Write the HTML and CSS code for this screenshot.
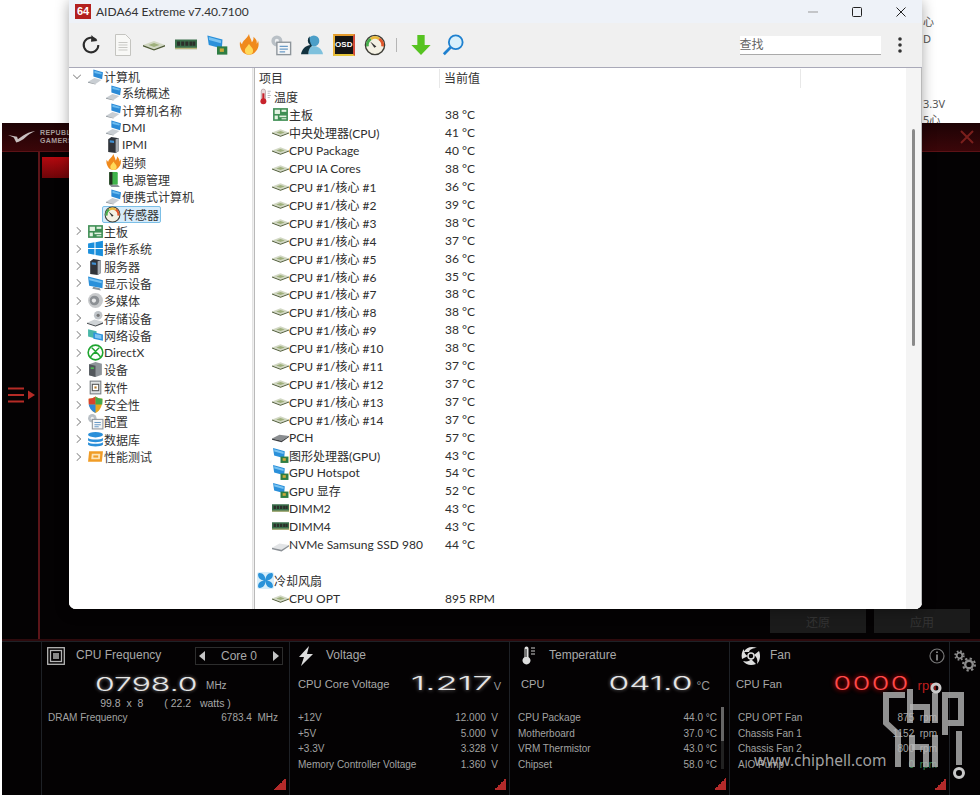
FILE: index.html
```html
<!DOCTYPE html>
<html lang="zh-CN">
<head>
<meta charset="utf-8">
<title>AIDA64 Extreme</title>
<link rel="stylesheet" href="styles.css">
</head>
<body>
<svg class="defs" width="0" height="0" aria-hidden="true">
  <symbol id="i-pc" viewBox="0 0 16 16"><path d="M6 1.500l9 2.500-.8 6.500L6 8z" fill="#2b8ad6"/><path d="M7 2.600l7 2-.5 1.600L7 4.600z" fill="#6cbcf0"/><path d="M1 13l6-3.600 6.600 2L8 15z" fill="#c9ced3"/><path d="M1 13l7 2 0 .6-7-1.800z" fill="#8d949a"/></symbol>
  <symbol id="i-chip" viewBox="0 0 16 16"><path d="M0 8l8-3 8 3-8 3z" fill="#d2d8c4"/><path d="M0 8l8 3 8-3 0 1-8 3-8-3z" fill="#4d5a36"/><path d="M4 8l4-1.500L12 8l-4 1.500z" fill="#9fb07c"/></symbol>
  <symbol id="i-board" viewBox="0 0 16 16"><rect x="1" y="2" width="14" height="12" fill="#3f8f55"/><rect x="2.500" y="3.500" width="5" height="4" fill="#e4f2e2"/><rect x="9" y="3.500" width="4.500" height="2" fill="#e4f2e2"/><rect x="2.500" y="9" width="3" height="3.500" fill="#e4f2e2"/><rect x="7" y="9" width="6.500" height="1.500" fill="#e4f2e2"/><rect x="9" y="11.500" width="4.500" height="1" fill="#e4f2e2"/></symbol>
  <symbol id="i-server" viewBox="0 0 16 16"><path d="M3 3l3-2 7 1v12l-3 2-7-1z" fill="#30343a"/><path d="M10 3l3-1v12l-3 2z" fill="#a6acb2"/><path d="M4.500 4l4 .5v2l-4-.5z" fill="#3f8fd0"/></symbol>
  <symbol id="i-flame" viewBox="0 0 16 16"><path d="M8 0c.5 3 2 4 2 6 1-1 1.500-2.500 1.200-4 2 2 2.800 3 2.300 5 .8-.5 1-1.500 1-2.500 1 3 .5 6-1.500 8-1.500 2-3 2.500-5 2.500s-4-.8-5-2.500C1.500 10 1 8 1.500 5.500c.5 1 1 1.500 1.500 2C3 5 6.500 3.500 8 0z" fill="#f08a1d"/><path d="M8 7c1 2 3 3 3 5s-1 3-3 3-3-1-3-3 2-3 3-5z" fill="#ffd95a"/></symbol>
  <symbol id="i-power" viewBox="0 0 16 16"><rect x="4" y="1" width="8" height="12" rx="1" fill="#3fb24a"/><rect x="4" y="1" width="3" height="12" fill="#23301f"/><path d="M4 13h8l2 2H6z" fill="#8b9096"/></symbol>
  <symbol id="i-gauge" viewBox="0 0 16 16"><circle cx="8" cy="8" r="7" fill="#f4f1e4" stroke="#3d3d36" stroke-width="1"/><path d="M2.500 9A5.500 5.500 0 0 1 5 3.500" fill="none" stroke="#46ac4c" stroke-width="2"/><path d="M5 3.500A5.500 5.500 0 0 1 11 3.500" fill="none" stroke="#e9b93a" stroke-width="2"/><path d="M11 3.500A5.500 5.500 0 0 1 13.500 9" fill="none" stroke="#e0572c" stroke-width="2"/><path d="M4.500 5.500L9 9l-1.500 1z" fill="#333"/></symbol>
  <symbol id="i-win" viewBox="0 0 16 16"><path d="M1 3.200l6-1v5.300H1zM8 2l7-1.200v6.700H8zM1 8.500h6v5.300l-6-1zM8 8.500h7v6.700L8 14z" fill="#1a8fdc"/></symbol>
  <symbol id="i-mon" viewBox="0 0 16 16"><path d="M1 1.500l14 3.500-.5 7.500L2 10z" fill="#2a90da"/><path d="M2 2.800l12 3-.3 2L2.200 5z" fill="#74c0f0"/><path d="M6 11l6 1.500 1 2-8-1.500z" fill="#8c949b"/></symbol>
  <symbol id="i-media" viewBox="0 0 16 16"><circle cx="8" cy="8" r="7" fill="#c7c9cb"/><circle cx="7" cy="8" r="4.500" fill="#8c9094"/><circle cx="6.500" cy="8" r="2" fill="#e6e7e8"/></symbol>
  <symbol id="i-storage" viewBox="0 0 16 16"><path d="M0 12l7-3 8 2-7 3.500z" fill="#cfd3d6"/><path d="M0 12l8 2.500 7-3v1.500l-7 2.500-8-2.500z" fill="#44484c"/><circle cx="10.500" cy="5" r="4" fill="#bfc4c8"/><circle cx="10.500" cy="5" r="1.500" fill="#777"/></symbol>
  <symbol id="i-net" viewBox="0 0 16 16"><path d="M1 2l8 2v7l-8-2z" fill="#49b7a8"/><path d="M6 5l9 2v6l-9-2z" fill="#2f93dc"/><path d="M7.500 6.500l6 1.300v3.500l-6-1.300z" fill="#7fc5f2"/></symbol>
  <symbol id="i-xbox" viewBox="0 0 16 16"><circle cx="8" cy="8" r="6.900" fill="#fff" stroke="#1fa52f" stroke-width="1.500"/><path d="M4.500 3.500C6 4.800 7.200 6 8 7c.8-1 2-2.200 3.500-3.500M3.300 12.200C4.500 10 6.500 8.300 8 7.500c1.500.8 3.500 2.500 4.700 4.700" fill="none" stroke="#1fa52f" stroke-width="1.400"/></symbol>
  <symbol id="i-device" viewBox="0 0 16 16"><path d="M2 3l6-2 6 1.500v10.500l-6 2-6-1.500z" fill="#8e9499"/><path d="M2 3l6 1.500V15l-6-1.500z" fill="#52575c"/><rect x="3.500" y="6" width="3" height="1.500" fill="#4fbf55"/></symbol>
  <symbol id="i-soft" viewBox="0 0 16 16"><rect x="3" y="2" width="10" height="12" fill="#dfe2e4" stroke="#777c80"/><rect x="5" y="5" width="6" height="6" fill="#fff" stroke="#555"/><rect x="7" y="7" width="2" height="2" fill="#b37a2e"/></symbol>
  <symbol id="i-shield" viewBox="0 0 16 16"><path d="M8 .5c2 1.500 4 2 6.500 2 0 6-1.500 11-6.500 13.500C3 13.500 1.500 8.500 1.500 2.500c2.500 0 4.500-.5 6.500-2z" fill="#e8a81f"/><path d="M8 .5V8H1.600c0-2 0-3.500 0-5.500 2.400 0 4.400-.5 6.400-2z" fill="#d8412e"/><path d="M8 .5V8h6.400c.1-2 .1-3.500.1-5.500-2.500 0-4.500-.5-6.500-2z" fill="#43a84a"/><path d="M1.600 8H8v8C4 14 2 11 1.600 8z" fill="#2f87d8"/></symbol>
  <symbol id="i-config" viewBox="0 0 16 16"><circle cx="5" cy="5" r="4" fill="#b9c0c6"/><circle cx="5" cy="5" r="1.500" fill="#eef0f2"/><rect x="5" y="6" width="10" height="9" fill="#f5f6f7" stroke="#8e959b"/><path d="M7 9h6M7 11h6M7 13h4" stroke="#6a9bc7"/></symbol>
  <symbol id="i-db" viewBox="0 0 16 16"><ellipse cx="8" cy="3.500" rx="7" ry="2.500" fill="#2a8fd9"/><path d="M1 6.500c2 2 12 2 14 0v2.500c-2 2-12 2-14 0z" fill="#2a8fd9"/><path d="M1 10.500c2 2 12 2 14 0V13c-2 2-12 2-14 0z" fill="#2a8fd9"/></symbol>
  <symbol id="i-perf" viewBox="0 0 16 16"><path d="M2 3h13l-1 10H1z" fill="#f09c26"/><path d="M4.500 5.500h8l-.4 5H4z" fill="#fce3b8"/><rect x="6" y="7" width="4.500" height="2" fill="#f09c26"/></symbol>
  <symbol id="i-thermo" viewBox="0 0 16 16"><rect x="4" y="1" width="4" height="11" rx="2" fill="#e9d9d9" stroke="#a98f8f" stroke-width=".6"/><rect x="5" y="5" width="2" height="7" fill="#c8232c"/><circle cx="6" cy="12.500" r="2.800" fill="#c8232c"/><path d="M10 3h3M10 5h2M10 7h3M10 9h2" stroke="#b9bcbf"/></symbol>
  <symbol id="i-ram" viewBox="0 0 16 16"><rect x="0" y="4" width="16" height="7" fill="#3a6f4b"/><path d="M1.500 5.500h2.200v3H1.500zM4.500 5.500h2.200v3H4.500zM7.500 5.500h2.200v3H7.500zM10.500 5.500h2.200v3h-2.200zM13 5.500h1.800v3H13z" fill="#2b2f2a"/><rect y="10" width="16" height="1" fill="#b8b57a"/></symbol>
  <symbol id="i-gpu" viewBox="0 0 16 16"><path d="M1 1l11 3-.5 6.500L2 8z" fill="#2a90da"/><path d="M2 2.200l9 2.500-.2 2L2.200 4.300z" fill="#79c3f2"/><rect x="8" y="9" width="7.500" height="6" fill="#2e7d43"/><rect x="10" y="10.500" width="3" height="2.500" fill="#caa93a"/></symbol>
  <symbol id="i-pch" viewBox="0 0 16 16"><path d="M0 9l7-3.500 9 1-7 4.500z" fill="#8a8d90"/><path d="M0 9l9 2 7-4.500v1L9 12.500 0 10z" fill="#3b3d40"/></symbol>
  <symbol id="i-ssd" viewBox="0 0 16 16"><path d="M0 11l7-4 9 1.500-7 4.500z" fill="#e2e4e6"/><path d="M0 11l9 2 7-4.500v1.300L9 14.500 0 12.500z" fill="#8b9095"/></symbol>
  <symbol id="i-fan" viewBox="0 0 16 16"><rect width="16" height="16" rx="2" fill="#d8eefa"/><path d="M8 8C4 8 1 6 1 2.500 1 1.500 1.500 1 2.500 1 6 1 8 4 8 8zM8 8c0-4 2-7 5.500-7 1 0 1.500.5 1.500 1.500C15 6 12 8 8 8zM8 8c4 0 7 2 7 5.500 0 1-.5 1.500-1.500 1.500C10 15 8 12 8 8zM8 8c0 4-2 7-5.500 7-1 0-1.500-.5-1.500-1.500C1 10 4 8 8 8z" fill="#2b93d9"/></symbol>
  <symbol id="i-doc" viewBox="0 0 16 22"><path d="M.5.500h10l5 5v16H.500z" fill="#f8f8f6" stroke="#c4c4c0"/><path d="M3.500 8.500h9M3.500 11h9M3.500 13.500h9M3.500 16h9" stroke="#c9c9c5"/></symbol>
  <symbol id="i-user" viewBox="0 0 24 24"><circle cx="14" cy="7.500" r="6" fill="#4c9fc8"/><path d="M8 22c0-6 2-9 6-9s9 3 10 9z" fill="#7ec1dd"/><path d="M9.500 2.500A6 6 0 0 0 10 12C4 13 1 17 0 22h8c0-4 1-7 4-9-2-3-3-7-2.500-10.500z" fill="#12323f"/></symbol>
  <symbol id="i-search" viewBox="0 0 24 24"><circle cx="15" cy="9" r="7.500" fill="#d9f0fb" stroke="#1e80cf" stroke-width="2"/><path d="M9.500 14.500L2 22" stroke="#1e80cf" stroke-width="3"/></symbol>
  <symbol id="i-down" viewBox="0 0 24 24"><path d="M8 1h8v11h6.500L12 23 1.500 12H8z" fill="#56c321"/></symbol>
</svg>

<main class="desktop">
  <span class="frag frag-a">心</span>
  <span class="frag frag-b">D</span>
  <span class="frag frag-c">3.3V</span>
  <span class="frag frag-d">5心</span>

  <section class="rog">
    <header class="rog-head">
      <svg class="rog-logo" viewBox="0 0 34 18" aria-hidden="true"><path d="M0 6l7 3 3 6c4-1 8-3 11-6 3-3 7-6 12-8-6 1-11 3-15 6-2 1.500-4 3-6 4l-1-3z" fill="#c9c0c0"/></svg>
      <div class="rog-brand">REPUBLIC OF<br>GAMERS</div>
      <svg class="rog-close" viewBox="0 0 14 14" aria-hidden="true"><path d="M1 1l12 12M13 1L1 13" stroke="#7a1f1c" stroke-width="2"/></svg>
    </header>
    <div class="rog-main">
      <aside class="rog-side">
        <svg class="rog-menu" viewBox="0 0 28 16" aria-hidden="true"><path d="M0 1.500h16M0 8h16M0 14.500h16" stroke="#b52b26" stroke-width="2.200"/><path d="M20 3.500l7 4.500-7 4.500z" fill="#b52b26"/></svg>
      </aside>
      <div class="rog-content">
        <div class="rog-tab"></div>
        <div class="rog-actions">
          <button class="rog-btn">还原</button>
          <button class="rog-btn">应用</button>
        </div>
      </div>
    </div>
    <div class="panels">
      <div class="panel-gap"></div>

      <div class="panel">
        <div class="p-head">
          <svg class="p-icon" viewBox="0 0 18 18" aria-hidden="true"><rect x=".7" y=".7" width="16.600" height="16.600" fill="none" stroke="#b5b5b5" stroke-width="1.300"/><rect x="3.500" y="3.500" width="11" height="11" fill="none" stroke="#b5b5b5" stroke-width="1.300"/><rect x="6" y="6" width="6" height="6" fill="#888"/></svg>
          <span class="p-title">CPU Frequency</span>
          <div class="core-box"><i class="arr arr-l"></i><span>Core 0</span><i class="arr arr-r"></i></div>
        </div>
        <div class="freq-big"><span class="digits digits-freq">0798.0</span><span class="unit">MHz</span></div>
        <div class="freq-sub"><span>99.8&nbsp; x&nbsp; 8</span><span>( 22.2&nbsp; &nbsp;watts )</span></div>
        <div class="p-row dram"><span>DRAM Frequency</span><span>6783.4&nbsp; MHz</span></div>
        <i class="corner"></i>
      </div>

      <div class="panel">
        <div class="p-head">
          <svg class="p-icon p-icon-bolt" viewBox="0 0 16 20" aria-hidden="true"><path d="M11 0L1 11h5l-3 9L15 8H9z" fill="#ddd"/></svg>
          <span class="p-title t-volt">Voltage</span>
        </div>
        <div class="big-row"><span>CPU Core Voltage</span><div class="big-val"><span class="digits digits-volt">1.217</span><span class="unit-s">V</span></div></div>
        <div class="p-list">
          <div class="p-row"><span>+12V</span><span>12.000&nbsp; V</span></div>
          <div class="p-row"><span>+5V</span><span>5.000&nbsp; V</span></div>
          <div class="p-row"><span>+3.3V</span><span>3.328&nbsp; V</span></div>
          <div class="p-row"><span>Memory Controller Voltage</span><span>1.360&nbsp; V</span></div>
        </div>
        <i class="corner"></i>
      </div>

      <div class="panel">
        <div class="p-head">
          <svg class="p-icon p-icon-temp" viewBox="0 0 14 20" aria-hidden="true"><path d="M2.500 2.500a2 2 0 0 1 4 0V11a4 4 0 1 1-4 0z" fill="#ddd"/><path d="M4 3v8" stroke="#111"/><path d="M9 2h4M9 5h4M9 8h4" stroke="#ccc" stroke-width="1.200"/></svg>
          <span class="p-title t-temp">Temperature</span>
        </div>
        <div class="big-row big-temp"><span>CPU</span><div class="big-val"><span class="digits digits-temp">041.0</span><span class="unit-s unit-c">°C</span></div></div>
        <div class="p-list p-list-temp">
          <div class="p-row"><span>CPU Package</span><span>44.0 °C</span></div>
          <div class="p-row"><span>Motherboard</span><span>37.0 °C</span></div>
          <div class="p-row"><span>VRM Thermistor</span><span>43.0 °C</span></div>
          <div class="p-row"><span>Chipset</span><span>58.0 °C</span></div>
          <i class="mini-scroll"></i>
        </div>
        <i class="corner"></i>
      </div>

      <div class="panel">
        <div class="p-head">
          <svg class="p-icon p-icon-fan" viewBox="0 0 20 20" aria-hidden="true"><circle cx="10" cy="10" r="3" fill="none" stroke="#ddd" stroke-width="1.500"/><path d="M3 6C5 1 11 0 16 2c-4 0-7 1-8 4zM18 5c2 5 1 10-2 13 1-4 0-7-3-9zM15 18c-5 2-10 1-13-3 4 1 7 0 8-2zM1 13C0 9 1 5 3 3c0 3 1 6 4 7z" fill="#ddd"/></svg>
          <span class="p-title t-fan">Fan</span>
          <svg class="p-info" viewBox="0 0 16 16" aria-hidden="true"><circle cx="8" cy="8" r="7" fill="none" stroke="#777" stroke-width="1.200"/><path d="M8 3.500v1.500M8 6.500v6" stroke="#888" stroke-width="1.800"/></svg>
        </div>
        <div class="big-row big-fan"><span>CPU Fan</span><div class="big-val"><span class="digits digits-fan">0000</span><span class="unit-rpm">rpm</span></div></div>
        <div class="p-list p-list-fan">
          <div class="p-row"><span>CPU OPT Fan</span><span>875&nbsp; rpm</span></div>
          <div class="p-row"><span>Chassis Fan 1</span><span>1152&nbsp; rpm</span></div>
          <div class="p-row"><span>Chassis Fan 2</span><span>800&nbsp; rpm</span></div>
          <div class="p-row"><span>AIO Pump</span><span class="rpm-green">0&nbsp; rpm</span></div>
        </div>
        <i class="corner"></i>
      </div>

      <div class="panel-gear">
        <svg class="gear" viewBox="0 0 24 24" aria-hidden="true"><g fill="none" stroke="#8b8b8b"><circle cx="6.500" cy="6.500" r="2.800" stroke-width="1.800"/><circle cx="6.500" cy="6.500" r="4.300" stroke-width="1.800" stroke-dasharray="1.700 1.700"/><circle cx="16" cy="15.500" r="3.800" stroke-width="2.400"/><circle cx="16" cy="15.500" r="6" stroke-width="2" stroke-dasharray="2.300 2.400"/></g></svg>
      </div>
    </div>
  </section>

  <svg class="mark" viewBox="0 0 82 95" aria-hidden="true">
    <g fill="none" stroke="#b5b5b5" stroke-opacity=".8" stroke-width="6">
      <polyline points="22,10 3,10 3,38 15,49 15,82"/>
      <polyline points="27,4 27,38"/>
      <polyline points="27,22 44,22 44,38"/>
      <polyline points="52,8 52,38"/>
      <polyline points="62,50 62,10 78,10 78,38 62,38"/>
      <polyline points="29,50 29,82"/>
      <polyline points="29,62 43,62 43,82"/>
      <polyline points="52,50 52,82"/>
      <polyline points="76,46 76,80"/>
    </g>
    <circle cx="53" cy="3" r="4" fill="none" stroke="#c9c9c9" stroke-width="3"/>
    <circle cx="76" cy="88" r="4.500" fill="none" stroke="#c9c9c9" stroke-width="3"/>
  </svg>
  <span class="mark-text">www.chiphell.com</span>

  <section class="aida">
    <header class="a-title">
      <span class="a-logo">64</span>
      <span class="a-name">AIDA64 Extreme v7.40.7100</span>
      <div class="a-caption">
        <svg viewBox="0 0 12 12" aria-hidden="true"><path d="M1 6h10" stroke="#999" stroke-width="1"/></svg>
        <svg viewBox="0 0 12 12" aria-hidden="true"><rect x="1.500" y="1.500" width="9" height="9" rx="1" fill="none" stroke="#222" stroke-width="1"/></svg>
        <svg viewBox="0 0 12 12" aria-hidden="true"><path d="M1.500 1.500l9 9M10.500 1.500l-9 9" stroke="#222" stroke-width="1"/></svg>
      </div>
    </header>
    <div class="a-tools">
      <svg class="t-ic" viewBox="0 0 24 24" aria-hidden="true"><path d="M17.800 6.500A8 8 0 1 0 20 12" fill="none" stroke="#2b2b2b" stroke-width="2.200"/><path d="M12.500 1l6.500 6.500-7 1z" fill="#2b2b2b"/></svg>
      <svg class="t-ic t-doc"><use href="#i-doc"/></svg>
      <svg class="t-ic"><use href="#i-chip"/></svg>
      <svg class="t-ic"><use href="#i-ram"/></svg>
      <svg class="t-ic"><use href="#i-gpu"/></svg>
      <svg class="t-ic"><use href="#i-flame"/></svg>
      <svg class="t-ic"><use href="#i-config"/></svg>
      <svg class="t-ic"><use href="#i-user"/></svg>
      <span class="t-osd">OSD</span>
      <svg class="t-ic"><use href="#i-gauge"/></svg>
      <i class="t-sep"></i>
      <svg class="t-ic"><use href="#i-down"/></svg>
      <svg class="t-ic"><use href="#i-search"/></svg>
      <div class="t-find">查找</div>
      <svg class="t-kebab" viewBox="0 0 4 16" aria-hidden="true"><circle cx="2" cy="2" r="1.800"/><circle cx="2" cy="8" r="1.800"/><circle cx="2" cy="14" r="1.800"/></svg>
    </div>
    <div class="a-body">
      <nav class="tree">
        <div class="t-row"><i class="chev open"></i><svg class="ic"><use href="#i-pc"/></svg><span>计算机</span></div>
        <div class="t-row sub"><svg class="ic"><use href="#i-pc"/></svg><span>系统概述</span></div>
        <div class="t-row sub"><svg class="ic"><use href="#i-pc"/></svg><span>计算机名称</span></div>
        <div class="t-row sub"><svg class="ic"><use href="#i-pc"/></svg><span>DMI</span></div>
        <div class="t-row sub"><svg class="ic"><use href="#i-server"/></svg><span>IPMI</span></div>
        <div class="t-row sub"><svg class="ic"><use href="#i-flame"/></svg><span>超频</span></div>
        <div class="t-row sub"><svg class="ic"><use href="#i-power"/></svg><span>电源管理</span></div>
        <div class="t-row sub"><svg class="ic"><use href="#i-pc"/></svg><span>便携式计算机</span></div>
        <div class="t-row sub sel"><div class="sel-box"><svg class="ic"><use href="#i-gauge"/></svg><span>传感器</span></div></div>
        <div class="t-row"><i class="chev"></i><svg class="ic"><use href="#i-board"/></svg><span>主板</span></div>
        <div class="t-row"><i class="chev"></i><svg class="ic"><use href="#i-win"/></svg><span>操作系统</span></div>
        <div class="t-row"><i class="chev"></i><svg class="ic"><use href="#i-server"/></svg><span>服务器</span></div>
        <div class="t-row"><i class="chev"></i><svg class="ic"><use href="#i-mon"/></svg><span>显示设备</span></div>
        <div class="t-row"><i class="chev"></i><svg class="ic"><use href="#i-media"/></svg><span>多媒体</span></div>
        <div class="t-row"><i class="chev"></i><svg class="ic"><use href="#i-storage"/></svg><span>存储设备</span></div>
        <div class="t-row"><i class="chev"></i><svg class="ic"><use href="#i-net"/></svg><span>网络设备</span></div>
        <div class="t-row"><i class="chev"></i><svg class="ic"><use href="#i-xbox"/></svg><span>DirectX</span></div>
        <div class="t-row"><i class="chev"></i><svg class="ic"><use href="#i-device"/></svg><span>设备</span></div>
        <div class="t-row"><i class="chev"></i><svg class="ic"><use href="#i-soft"/></svg><span>软件</span></div>
        <div class="t-row"><i class="chev"></i><svg class="ic"><use href="#i-shield"/></svg><span>安全性</span></div>
        <div class="t-row"><i class="chev"></i><svg class="ic"><use href="#i-config"/></svg><span>配置</span></div>
        <div class="t-row"><i class="chev"></i><svg class="ic"><use href="#i-db"/></svg><span>数据库</span></div>
        <div class="t-row"><i class="chev"></i><svg class="ic"><use href="#i-perf"/></svg><span>性能测试</span></div>
      </nav>
      <div class="list">
        <div class="l-head"><span class="c1">项目</span><span class="c2">当前值</span><span class="c3"></span></div>
        <div class="l-rows">
          <div class="l-row group"><span class="c1"><svg class="ic"><use href="#i-thermo"/></svg>温度</span></div>
          <div class="l-row"><span class="c1"><svg class="ic"><use href="#i-board"/></svg>主板</span><span class="c2">38 °C</span></div>
          <div class="l-row"><span class="c1"><svg class="ic"><use href="#i-chip"/></svg>中央处理器(CPU)</span><span class="c2">41 °C</span></div>
          <div class="l-row"><span class="c1"><svg class="ic"><use href="#i-chip"/></svg>CPU Package</span><span class="c2">40 °C</span></div>
          <div class="l-row"><span class="c1"><svg class="ic"><use href="#i-chip"/></svg>CPU IA Cores</span><span class="c2">38 °C</span></div>
          <div class="l-row"><span class="c1"><svg class="ic"><use href="#i-chip"/></svg>CPU #1/核心 #1</span><span class="c2">36 °C</span></div>
          <div class="l-row"><span class="c1"><svg class="ic"><use href="#i-chip"/></svg>CPU #1/核心 #2</span><span class="c2">39 °C</span></div>
          <div class="l-row"><span class="c1"><svg class="ic"><use href="#i-chip"/></svg>CPU #1/核心 #3</span><span class="c2">38 °C</span></div>
          <div class="l-row"><span class="c1"><svg class="ic"><use href="#i-chip"/></svg>CPU #1/核心 #4</span><span class="c2">37 °C</span></div>
          <div class="l-row"><span class="c1"><svg class="ic"><use href="#i-chip"/></svg>CPU #1/核心 #5</span><span class="c2">36 °C</span></div>
          <div class="l-row"><span class="c1"><svg class="ic"><use href="#i-chip"/></svg>CPU #1/核心 #6</span><span class="c2">35 °C</span></div>
          <div class="l-row"><span class="c1"><svg class="ic"><use href="#i-chip"/></svg>CPU #1/核心 #7</span><span class="c2">38 °C</span></div>
          <div class="l-row"><span class="c1"><svg class="ic"><use href="#i-chip"/></svg>CPU #1/核心 #8</span><span class="c2">38 °C</span></div>
          <div class="l-row"><span class="c1"><svg class="ic"><use href="#i-chip"/></svg>CPU #1/核心 #9</span><span class="c2">38 °C</span></div>
          <div class="l-row"><span class="c1"><svg class="ic"><use href="#i-chip"/></svg>CPU #1/核心 #10</span><span class="c2">38 °C</span></div>
          <div class="l-row"><span class="c1"><svg class="ic"><use href="#i-chip"/></svg>CPU #1/核心 #11</span><span class="c2">37 °C</span></div>
          <div class="l-row"><span class="c1"><svg class="ic"><use href="#i-chip"/></svg>CPU #1/核心 #12</span><span class="c2">37 °C</span></div>
          <div class="l-row"><span class="c1"><svg class="ic"><use href="#i-chip"/></svg>CPU #1/核心 #13</span><span class="c2">37 °C</span></div>
          <div class="l-row"><span class="c1"><svg class="ic"><use href="#i-chip"/></svg>CPU #1/核心 #14</span><span class="c2">37 °C</span></div>
          <div class="l-row"><span class="c1"><svg class="ic"><use href="#i-pch"/></svg>PCH</span><span class="c2">57 °C</span></div>
          <div class="l-row"><span class="c1"><svg class="ic"><use href="#i-gpu"/></svg>图形处理器(GPU)</span><span class="c2">43 °C</span></div>
          <div class="l-row"><span class="c1"><svg class="ic"><use href="#i-gpu"/></svg>GPU Hotspot</span><span class="c2">54 °C</span></div>
          <div class="l-row"><span class="c1"><svg class="ic"><use href="#i-gpu"/></svg>GPU 显存</span><span class="c2">52 °C</span></div>
          <div class="l-row"><span class="c1"><svg class="ic"><use href="#i-ram"/></svg>DIMM2</span><span class="c2">43 °C</span></div>
          <div class="l-row"><span class="c1"><svg class="ic"><use href="#i-ram"/></svg>DIMM4</span><span class="c2">43 °C</span></div>
          <div class="l-row"><span class="c1"><svg class="ic"><use href="#i-ssd"/></svg>NVMe Samsung SSD 980</span><span class="c2">44 °C</span></div>
          <div class="l-row"></div>
          <div class="l-row group"><span class="c1"><svg class="ic"><use href="#i-fan"/></svg>冷却风扇</span></div>
          <div class="l-row"><span class="c1"><svg class="ic"><use href="#i-chip"/></svg>CPU OPT</span><span class="c2">895 RPM</span></div>
        </div>
        <div class="l-scroll"><i class="l-thumb"></i></div>
      </div>
    </div>
  </section>
</main>
</body>
</html>
```

FILE: styles.css
```css
* { box-sizing: border-box; }
html, body { margin: 0; height: 100%; }
body { overflow: hidden; background: #fff; }
.defs { position: absolute; }
.desktop { position: relative; width: 980px; height: 795px; overflow: hidden; background: #fff; }

.frag { position: absolute; left: 923px; font: 11px/12px "Noto Sans", "Noto Sans CJK SC", sans-serif; color: #555; }
.frag-a { top: 16px; }
.frag-b { top: 33px; }
.frag-c { top: 98px; }
.frag-d { top: 114px; }

/* ROG window */
.rog { position: absolute; left: 2px; top: 123px; width: 978px; height: 672px; background: #040203; display: flex; flex-direction: column; font-family: "Liberation Sans", Arial, sans-serif; color: #b5b5b5; }
.rog-head { height: 29px; flex: none; display: flex; align-items: center; padding: 0 5px; background: linear-gradient(#1d0305, #3b0609); border-bottom: 1px solid #5b1216; }
.rog-logo { width: 28px; height: 17px; margin-left: 1px; }
.rog-brand { font-size: 7px; line-height: 8px; font-weight: 700; letter-spacing: .4px; color: #a89c9c; margin-left: 4px; white-space: nowrap; }
.rog-close { width: 14px; height: 14px; margin-left: auto; margin-right: 1px; }
.rog-main { flex: 1; display: flex; min-height: 0; border-bottom: 2px solid #2e0a0d; }
.rog-side { width: 38px; flex: none; border-right: 2px solid #5c1519; display: flex; align-items: center; justify-content: center; padding-bottom: 2px; }
.rog-menu { width: 28px; height: 16px; margin-left: 3px; }
.rog-content { flex: 1; display: flex; flex-direction: column; padding: 5px 10px 6px 2px; }
.rog-tab { width: 200px; height: 21px; background: linear-gradient(#b3090f, #6e0509); }
.rog-actions { margin-top: auto; display: flex; justify-content: flex-end; gap: 8px; }
.rog-btn { width: 96px; height: 24px; border: 0; padding: 0; background: #1b1b1b; color: #333; font: 12px "Noto Sans CJK SC", sans-serif; }

.panels { height: 154px; flex: none; display: grid; grid-template-columns: 39px 248px 220px 220px 220px 1fr; }
.panel { position: relative; border: 1px solid #1e2126; border-bottom: 0; border-right-width: 0; font-size: 10px; min-width: 0; }
.p-head { height: 23px; display: flex; align-items: center; padding: 5px 6px 0 5px; }
.p-icon { width: 18px; height: 18px; flex: none; }
.p-title { font-size: 12px; color: #a8a8a8; margin: 0 0 2px 11px; }
.t-volt { margin-left: 12px; }
.t-temp { margin-left: 13px; }
.t-fan { margin-left: 9px; }
.core-box { margin-left: auto; width: 88px; height: 18px; border: 1px solid #2d2d2d; display: flex; align-items: center; justify-content: space-between; padding: 0 3px; font-size: 12px; color: #a8a8a8; }
.arr { width: 0; height: 0; border-style: solid; border-width: 5.500px 0; border-color: transparent; }
.arr-l { border-right: 6px solid #c4c4c4; }
.arr-r { border-left: 6px solid #c4c4c4; }

.digits { display: inline-block; font-family: Inter, sans-serif; font-weight: 300; font-size: 19px; line-height: 20px; color: #e6e6e6; text-shadow: 0 0 3px #fff8; white-space: nowrap; }
.freq-big { margin-top: 10px; height: 20px; display: flex; align-items: center; padding-left: 53px; }
.digits-freq { transform-origin: left center; transform: scaleX(1.68); }
.unit { font-size: 10px; color: #a8a8a8; margin-left: 50px; }
.freq-sub { margin-top: 2px; height: 12px; line-height: 12px; display: flex; justify-content: center; gap: 21px; color: #a8a8a8; font-size: 10.500px; }
.p-row { display: flex; justify-content: space-between; height: 15.700px; line-height: 15.700px; white-space: nowrap; color: #a2a2a2; }
.dram { margin: 3px 11px 0 6px; height: 12px; line-height: 12px; }

.big-row { margin-top: 9px; height: 20px; display: flex; align-items: center; justify-content: space-between; padding: 0 8px; font-size: 11.200px; color: #a8a8a8; }
.big-temp { padding-left: 11px; }
.big-fan { padding-left: 6px; }
.big-val { display: flex; align-items: center; }
.digits-volt { transform-origin: right center; transform: scaleX(1.92); }
.digits-temp { transform-origin: right center; transform: scaleX(1.77); }
.unit-s { font-size: 11px; color: #999; margin: 3px 0 0 1px; }
.unit-c { margin-left: 4px; margin-right: 11px; font-size: 12px; }
.unit-rpm { font-size: 13px; color: #c01e1e; margin: 2px 1px 0 8px; }
.digits-fan { transform-origin: right center; transform: scaleX(1.5); color: #ff4a4a; letter-spacing: 1px; text-shadow: 0 0 4px #f00; }
.p-list { position: relative; margin-top: 16px; padding: 0 11px 0 8px; }
.p-list-temp { padding: 0 12px 0 8px; }
.p-list-fan { padding: 0 12px 0 8px; }
.mini-scroll { position: absolute; right: 5px; top: -3px; width: 3px; height: 62px; background: linear-gradient(#666 55%, #222 55%); }
.rpm-green { color: #3d8f5e; }
.p-icon-bolt { width: 16px; margin-left: 3px; height: 20px; }
.p-icon-temp { width: 14px; margin-left: 7px; height: 20px; }
.p-icon-fan { width: 20px; height: 20px; margin-left: 6px; }
.p-info { width: 16px; height: 16px; margin-left: auto; margin-right: -2px; }
.corner { position: absolute; right: 3px; bottom: 5px; width: 12px; height: 12px; background: linear-gradient(135deg, transparent 50%, #b32a2a 50%); }
.panel-gap { border-top: 1px solid #1e2126; }
.panel-gear { border-left: 1px solid #1e2126; border-top: 1px solid #1e2126; padding: 7px 0 0 3px; }
.gear { width: 24px; height: 24px; display: block; }

/* Watermark */
.mark { position: absolute; left: 883px; top: 685px; width: 82px; height: 95px; overflow: visible; }
.mark-text { position: absolute; left: 754px; top: 749px; font: 15.500px/22px "Noto Sans", sans-serif; color: #bcbcbc; opacity: .85; }

/* AIDA window */
.aida { position: absolute; left: 69px; top: 0; width: 853px; height: 609px; background: #f0f0f0; border-radius: 0 0 7px 7px; overflow: hidden; box-shadow: 0 2px 14px rgba(0,0,0,.35); display: flex; flex-direction: column; font-family: Lato, "Noto Sans CJK SC", sans-serif; font-size: 12px; color: #2e2e2e; }
.a-title { height: 23px; flex: none; background: #eef2f8; display: flex; align-items: center; padding-left: 6px; }
.a-logo { width: 16px; height: 15px; background: #b3211f; color: #fff; font: 700 11px/15px "Liberation Sans", sans-serif; text-align: center; }
.a-name { margin-left: 5px; font-size: 12px; color: #333; }
.a-caption { margin-left: auto; display: flex; gap: 32px; padding-right: 15px; }
.a-caption svg { width: 12px; height: 12px; display: block; }
.a-tools { height: 45px; flex: none; display: flex; align-items: center; padding: 0 0 0 11px; gap: 9.600px; border-bottom: 1px solid #a9a9b8; }
.t-ic { width: 22px; height: 22px; flex: none; }
.t-doc { width: 16px; margin: 0 3px; }
.t-osd { width: 22px; height: 22px; flex: none; background: #141414; border: 2px solid; border-color: #e39a2d #d14a3a #e6c53a #e8b23a; color: #fff; font: 700 8px/18px "Liberation Sans", sans-serif; text-align: center; }
.t-sep { width: 1px; height: 14px; background: #b5b5b5; margin: 0 3.600px 0 0; flex: none; }
.t-find { width: 141px; height: 19px; margin-left: 266.200px; background: #fff; border-bottom: 1px solid #aaa; font-size: 12px; line-height: 18px; color: #666; flex: none; }
.t-kebab { width: 4px; height: 16px; margin-left: 8px; fill: #333; flex: none; }
.a-body { flex: 1; min-height: 0; display: flex; background: #f0f0f0; }
.tree { width: 184px; flex: none; background: #fff; border-right: 1px solid #e4e4e4; }
.t-row { height: 17.320px; display: flex; align-items: center; padding-left: 0; white-space: nowrap; color: #333; }
.t-row:first-child { height: 16.320px; }
.t-row.sub { padding-left: 36px; }
.t-row.sel { padding-left: 33px; }
.sel-box { display: flex; align-items: center; gap: 2px; height: 17px; padding: 0 1px; background: #d6ecfb; border: 1px solid #7cbfe6; border-radius: 2px; }
.ic { width: 17px; height: 17px; flex: none; }
.chev { width: 8px; height: 8px; margin: 0 6px 0 4px; flex: none; border: solid #777; border-width: 0 1px 1px 0; transform: scale(.72) rotate(-45deg); }
.chev.open { transform: scale(.72) rotate(45deg) translate(-1px,-1px); }
.list { position: relative; flex: 1; margin-left: 1px; min-width: 0; background: #fff; border-left: 1px solid #b9b9b9; border-right: 1px solid #b9b9b9; }
.l-head { height: 20px; display: flex; color: #333; line-height: 20px; padding-top: 1px; }
.l-head .c1 { width: 185px; padding-left: 4px; border-right: 1px solid #e8e8e8; }
.l-head .c2 { width: 361px; padding-left: 4px; border-right: 1px solid #e8e8e8; }
.l-row { height: 17.920px; display: flex; align-items: center; white-space: nowrap; }
.l-row .c1 { width: 190px; padding-left: 17px; display: flex; align-items: center; }
.l-row.group .c1 { padding-left: 2px; }
.l-row .c2 { flex: 1; }
.l-scroll { position: absolute; right: 0; top: 0; bottom: 0; width: 15px; background: #f4f4f4; }
.l-thumb { position: absolute; left: 6px; top: 61px; width: 3px; height: 217px; border-radius: 2px; background: #8a8a8a; }
```
